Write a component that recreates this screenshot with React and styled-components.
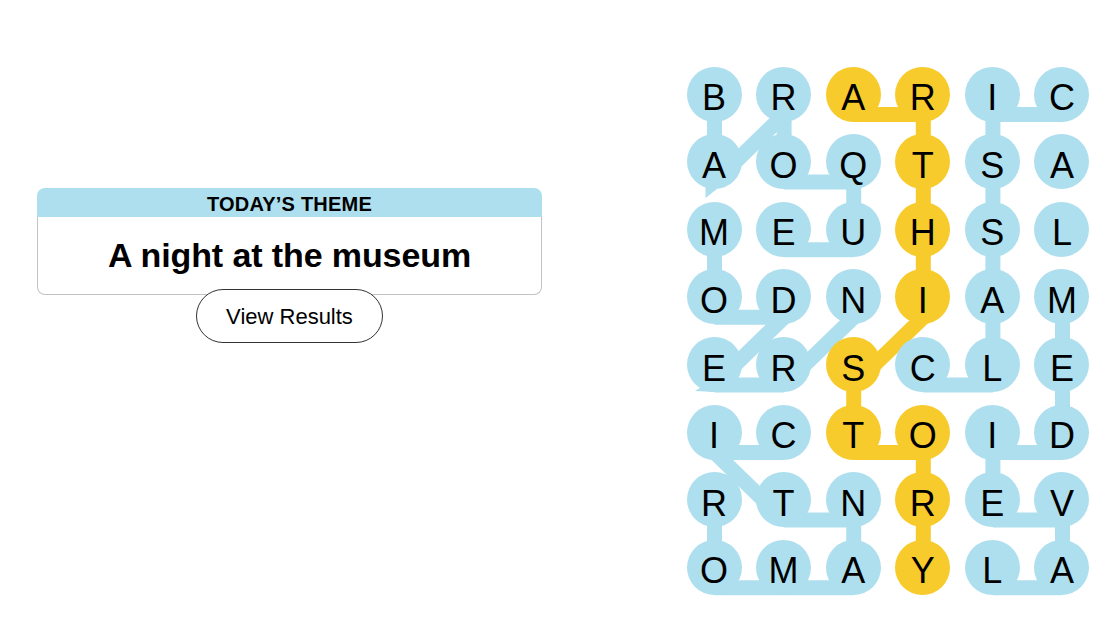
import React from 'react';
import styled, { createGlobalStyle } from 'styled-components';

const BLUE = '#aedfee';
const YELLOW = '#f8cb2c';

const CELL = 55;
const COL_STEP = 69.6;
const ROW_STEP = 67.6;
const LINE_DROP = 20;

const LETTERS = [
  'BRARIC',
  'AOQTSA',
  'MEUHSL',
  'ODNIAM',
  'ERSCLE',
  'ICTOID',
  'RTNREV',
  'OMAYLA',
];

// found words, as [row, col] paths
const WORDS = [
  { spangram: false, path: [[0, 0], [1, 0], [0, 1], [1, 1], [1, 2], [2, 2], [2, 1]] },
  { spangram: false, path: [[2, 0], [3, 0], [3, 1], [4, 0], [4, 1], [3, 2]] },
  { spangram: true, path: [[0, 2], [0, 3], [1, 3], [2, 3], [3, 3], [4, 2], [5, 2], [5, 3], [6, 3], [7, 3]] },
  { spangram: false, path: [[4, 3], [4, 4], [3, 4], [2, 4], [1, 4], [0, 4], [0, 5]] },
  { spangram: false, path: [[3, 5], [4, 5], [5, 5], [5, 4], [6, 4], [6, 5], [7, 5], [7, 4]] },
  { spangram: false, path: [[6, 0], [7, 0], [7, 1], [7, 2], [6, 2], [6, 1], [5, 0], [5, 1]] },
];

const cx = (c) => CELL / 2 + COL_STEP * c;
const cy = (r) => CELL / 2 + ROW_STEP * r;

const spangramCells = new Set(
  WORDS.filter((w) => w.spangram).flatMap((w) => w.path.map(([r, c]) => `${r}-${c}`))
);

const GlobalStyle = createGlobalStyle`
  html, body {
    margin: 0;
    padding: 0;
    background: #fff;
  }
  body {
    font-family: "Liberation Sans", Arial, sans-serif;
    color: #000;
  }
`;

const Page = styled.div`
  display: flex;
  align-items: flex-start;
  padding: 67px 0 0 37px;
  width: 1119px;
  height: 629px;
  box-sizing: border-box;
`;

const LeftColumn = styled.div`
  width: 505px;
  margin-top: 121px;
  display: flex;
  flex-direction: column;
  align-items: center;
`;

const ThemeCard = styled.div`
  width: 100%;
  display: flex;
  flex-direction: column;
`;

const ThemeHeader = styled.div`
  height: 29px;
  background: ${BLUE};
  border-radius: 8px 8px 0 0;
  display: flex;
  align-items: center;
  justify-content: center;
  padding-top: 4px;
  box-sizing: border-box;
  font-size: 20px;
  font-weight: 700;
  letter-spacing: 0.2px;
  text-transform: uppercase;
`;

const ThemeBody = styled.div`
  height: 78px;
  box-sizing: border-box;
  border: 1px solid #c2c2c2;
  border-top: 0;
  border-radius: 0 0 8px 8px;
  display: flex;
  align-items: center;
  justify-content: center;
  font-size: 34px;
  font-weight: 700;
  letter-spacing: -0.1px;
`;

const ResultsButton = styled.button`
  margin-top: -6px;
  width: 187px;
  height: 54px;
  border: 1px solid #333;
  border-radius: 27px;
  background: #fff;
  font-family: "Liberation Sans", Arial, sans-serif;
  font-size: 22px;
  color: #000;
  padding: 2px 0 0;
  cursor: pointer;
`;

const Board = styled.div`
  position: relative;
  margin-left: 144.5px;
  margin-top: -0.3px;
  display: grid;
  grid-template-columns: repeat(6, ${CELL}px);
  grid-template-rows: repeat(8, ${CELL}px);
  column-gap: ${COL_STEP - CELL}px;
  row-gap: ${ROW_STEP - CELL}px;
`;

const Connectors = styled.svg`
  position: absolute;
  left: 0;
  top: 0;
  overflow: visible;
  z-index: 0;
`;

const Cell = styled.div`
  position: relative;
  z-index: 1;
  width: ${CELL}px;
  height: ${CELL}px;
  border-radius: 50%;
  background: ${(p) => (p.$spangram ? YELLOW : BLUE)};
  display: flex;
  align-items: center;
  justify-content: center;
  padding-top: 8px;
  box-sizing: border-box;
  font-size: 36px;
  line-height: 1;
  text-transform: uppercase;
`;

const WordLines = ({ word }) => {
  const color = word.spangram ? YELLOW : BLUE;
  const segs = [];
  for (let i = 0; i < word.path.length - 1; i++) {
    const [r1, c1] = word.path[i];
    const [r2, c2] = word.path[i + 1];
    segs.push(
      <line
        key={i}
        x1={cx(c1)}
        y1={cy(r1) + LINE_DROP}
        x2={cx(c2)}
        y2={cy(r2) + LINE_DROP}
        stroke={color}
        strokeWidth={15}
      />
    );
  }
  return <g>{segs}</g>;
};

export default function App() {
  const boardW = CELL * 6 + (COL_STEP - CELL) * 5;
  const boardH = CELL * 8 + (ROW_STEP - CELL) * 7;

  return (
    <>
      <GlobalStyle />
      <Page>
        <LeftColumn>
          <ThemeCard>
            <ThemeHeader>Today’s Theme</ThemeHeader>
            <ThemeBody>A night at the museum</ThemeBody>
          </ThemeCard>
          <ResultsButton>View Results</ResultsButton>
        </LeftColumn>

        <Board>
          <Connectors width={boardW} height={boardH} viewBox={`0 0 ${boardW} ${boardH}`}>
            {WORDS.map((w, i) => (
              <WordLines key={i} word={w} />
            ))}
            {/* small stubs left by the diagonal strokes */}
            <polygon points="18.5,120 18.5,131 30,122" fill={BLUE} />
            <polygon points="8,324 26,313 28,325" fill={BLUE} />
          </Connectors>
          {LETTERS.map((row, r) =>
            row.split('').map((ch, c) => (
              <Cell key={`${r}-${c}`} $spangram={spangramCells.has(`${r}-${c}`)}>
                {ch}
              </Cell>
            ))
          )}
        </Board>
      </Page>
    </>
  );
}
